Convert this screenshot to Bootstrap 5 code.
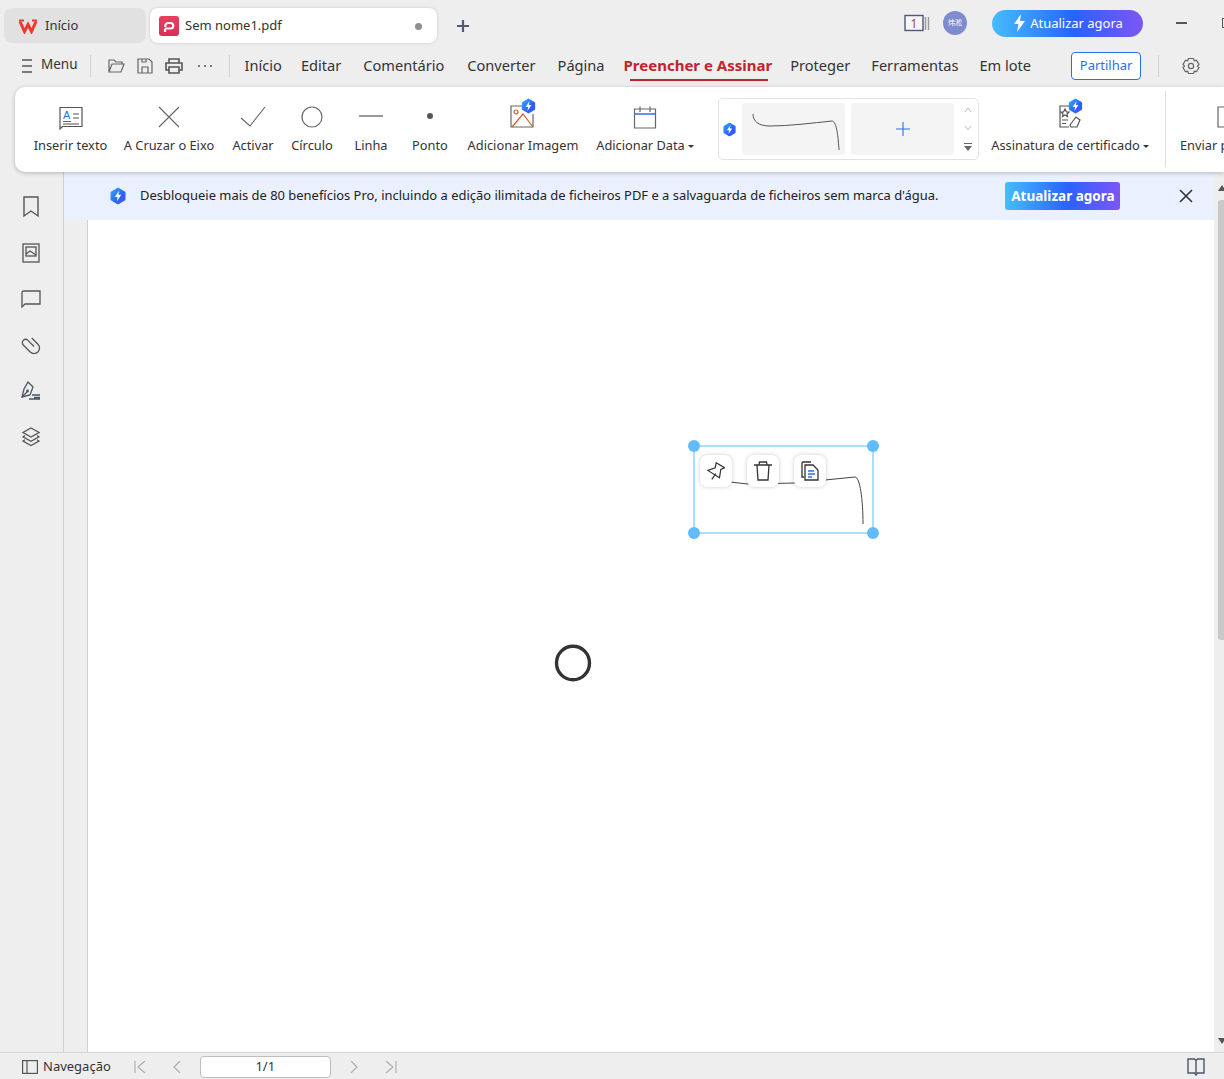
<!DOCTYPE html>
<html lang="pt">
<head>
  <meta charset="UTF-8">
  <title>Sem nome1.pdf</title>
  <link href="https://cdn.jsdelivr.net/npm/bootstrap@5.3.3/dist/css/bootstrap.min.css" rel="stylesheet">
  <style>
    html, body { height: 100%; }
    body { background: #eeeeee; color: #333; font-family: "Noto Sans", "Noto Sans CJK SC", sans-serif; font-size: 13px; overflow: hidden; }
    svg { display: block; flex: none; }
    .app { height: 1079px; width: 1224px; overflow: hidden; }

    /* barra de separadores */
    .tabbar { height: 44px; padding: 8px 0 0 4px; }
    .tab-home { width: 142px; height: 35px; background: #e1e1e1; border-radius: 8px; padding: 1px 0 0 14px; gap: 7px; }
    .tab-doc { width: 287px; height: 35px; background: #fff; border-radius: 8px; margin-left: 4px; padding: 1px 15px 0 9px; gap: 6px; box-shadow: 0 0 3px rgba(0,0,0,.18); }
    .tab-dot { width: 7px; height: 7px; background: #8f8f8f; border-radius: 50%; }
    .tab-plus { margin: 10px 0 0 18px; }
    .upgrade-pill { width: 151px; height: 27px; border-radius: 14px; background: linear-gradient(90deg, #45bdfd, #2a62ff 55%, #7d56f5); color: #fff; gap: 4px; font-size: 13px; }
    .upgrade-pill span { padding-top: 2px; }
    .avatar { width: 24px; height: 24px; border-radius: 50%; background: #7f8bd0; color: #fff; font-size: 7px; margin: 0 25px 0 13px; }
    .top-right { margin-top: -6px; }
    .win-min { width: 11px; height: 2px; background: #555; margin-left: 33px; margin-right: 35px; }
    .win-max { width: 2px; height: 10px; border: 1.5px solid #555; border-right: 0; }

    /* barra de menu */
    .menubar { height: 43px; padding-left: 22px; }
    .menu-word { margin: -2px 12px 0 9px; font-size: 13.5px; }
    .vsep { width: 1px; height: 22px; background: #d2d2d2; }
    .quick { gap: 12px; padding: 0 16px; }
    .mtabs { gap: 21px; padding-left: 15px; font-size: 14.6px; white-space: nowrap; }
    .mtab-on { color: #c0242f; font-size: 15px; font-weight: 700; position: relative; }
    .mtab-on::after { content: ""; position: absolute; left: 6px; right: 4px; bottom: -4px; height: 2px; background: #c0242f; }
    .mtab-m3 { margin-left: -3px; }
    .mtab-m2 { margin-left: -2px; }
    .mtab-p1 { margin-left: 1px; }
    .mtab-p2 { margin-left: 2px; }
    .share-btn { width: 70px; height: 28px; margin-left: 40px; border: 1px solid #2b6fe8; border-radius: 4px; background: #fff; color: #2b6fe8; font-size: 13px; }
    .gear-sep { margin: 0 23px 0 17px; }

    /* faixa de ferramentas */
    .ribbon { height: 85px; margin-left: 15px; padding-left: 11px; background: #fff; border-radius: 10px 0 0 10px; box-shadow: 0 1px 4px rgba(0,0,0,.25); position: relative; z-index: 2; overflow: hidden; white-space: nowrap; font-size: 12.8px; }
    .rb-item { height: 85px; padding-top: 19px; flex: none; }
    .rb-icon { height: 30px; }
    .rb-icon-pro { height: 38px; margin-top: -8px; }
    .rb-label { line-height: 18px; }
    .caret { display: inline-block; width: 0; height: 0; border: 3px solid transparent; border-top: 3.5px solid #333; margin: 0 0 -1px 3px; }
    .w-ins { width: 89px; } .w-cruz { width: 108px; } .w-act { width: 60px; } .w-circ { width: 58px; }
    .w-lin { width: 60px; } .w-pon { width: 58px; } .w-img { width: 128px; } .w-dat { width: 116px; }
    .w-cert { width: 182px; } .w-env { width: 44px; }
    .gallery { flex: none; width: 261px; height: 62px; margin: 11px 0 0 15px; border: 1px solid #e2e2e2; border-radius: 5px; padding: 4px 0 4px 4px; gap: 6px; }
    .sig-thumb, .sig-add { flex: none; width: 103px; height: 52px; background: #f4f4f4; border-radius: 3px; }
    .gal-arrows { flex: none; width: 16px; height: 52px; }
    .rb-sep { width: 1px; height: 76px; background: #dcdcdc; margin: 4px 14px 0 4px; flex: none; }

    /* zona principal */
    .workspace { height: 880px; }
    .sidebar { width: 64px; flex: none; border-right: 1px solid #d0d0d0; padding: 23px 1px 0 0; gap: 22px; }
    .side-slot { height: 24px; }
    .doc-col { flex: 1; min-width: 0; }
    .promo { height: 48px; padding-left: 46px; background: #eaf0fe; gap: 14px; color: #222; font-size: 12.95px; white-space: nowrap; }
    .promo-btn { flex: none; width: 115px; height: 28px; margin-left: 53px; border-radius: 3px; background: linear-gradient(90deg, #45bdfd, #2a62ff 55%, #7d56f5); color: #fff; font-weight: 700; font-size: 13.5px; }
    .promo-x { margin-left: 45px; }
    .doc-area { flex: 1; min-height: 0; }
    .gutter { width: 24px; border-right: 1px solid #d0d0d0; }
    .pdf-page { flex: 1; background: #fff; position: relative; }
    .scroll-col { width: 10px; flex: none; padding: 13px 0 8px 4px; }
    .scroll-thumb { height: 440px; margin-top: 9px; background: #c9c9c9; border-radius: 3px 0 0 3px; }
    .arrow-up { width: 0; height: 0; border: 4px solid transparent; border-bottom: 6px solid #555; border-top: 0; }
    .arrow-dn { width: 0; height: 0; margin-top: auto; border: 4px solid transparent; border-top: 6px solid #555; border-bottom: 0; }

    /* objetos colocados na pagina */
    .sel-box { position: absolute; left: 605px; top: 225px; width: 181px; height: 89px; border: 2px solid #aadfff; }
    .handle { position: absolute; width: 12px; height: 12px; border-radius: 50%; background: #62bbff; }
    .h-tl { left: -7px; top: -7px; } .h-tr { right: -7px; top: -7px; } .h-bl { left: -7px; bottom: -7px; } .h-br { right: -7px; bottom: -7px; }
    .sig-line { position: absolute; left: -2px; top: -2px; }
    .float-tools { position: absolute; left: 5px; top: 8px; gap: 15px; }
    .float-btn { width: 32px; height: 32px; background: #fff; border-radius: 7px; box-shadow: 0 0 4px rgba(0,0,0,.2); }
    .drawn-circle { position: absolute; left: 466px; top: 424px; }

    /* barra de estado */
    .statusbar { height: 27px; border-top: 1px solid #d4d4d4; padding: 1px 19px 0 22px; font-size: 13px; }
    .nav-word { margin: 0 23px 0 5px; }
    .nav-prev { margin-left: 27px; }
    .page-input { width: 131px; height: 22px; margin: 0 19px; background: #fff; border: 1px solid #bdbdbd; border-radius: 4px; }
    .nav-last { margin-left: 27px; }
  </style>
</head>
<body>
<svg width="0" height="0" class="position-absolute">
  <defs>
    <linearGradient id="proGrad" x1="0" y1="0" x2="1" y2="1">
      <stop offset="0" stop-color="#34b0fb"/><stop offset=".6" stop-color="#2a62ff"/><stop offset="1" stop-color="#4a55f5"/>
    </linearGradient>
    <linearGradient id="pdfGrad" x1="0" y1="0" x2="0" y2="1">
      <stop offset="0" stop-color="#e9405f"/><stop offset="1" stop-color="#d92f55"/>
    </linearGradient>
    <symbol id="pro" viewBox="0 0 16 18">
      <path d="M8 0.5 14.8 4.4Q15.5 4.8 15.5 5.6V12.4Q15.5 13.2 14.8 13.6L8 17.5 1.2 13.6Q.5 13.2.5 12.4V5.6Q.5 4.8 1.2 4.4Z" fill="url(#proGrad)"/>
      <path d="M9.2 3.5 4.8 10H7.6L6.8 14.5 11.3 7.8H8.4Z" fill="#fff"/>
    </symbol>
  </defs>
</svg>

<div class="app d-flex flex-column">

  <div class="tabbar d-flex">
    <div class="tab-home d-flex align-items-center">
      <svg width="20" height="15" viewBox="0 0 20 15" fill="none" stroke="#ea3a2a" stroke-width="3"><path d="M2 2.500 6.500 12.500 10 5.500 13.500 12.500 18 2.500"/><path d="M1 1.500H6M14 1.500H19" stroke-width="2"/></svg>
      <span>Início</span>
    </div>
    <div class="tab-doc d-flex align-items-center">
      <svg width="20" height="20" viewBox="0 0 20 20" fill="none"><rect width="20" height="20" rx="3" fill="url(#pdfGrad)"/><path d="M6 16V12.500M6 12.500H11.500A2.700 2.700 0 0 0 11.500 7H9A2.700 2.700 0 0 0 6.300 9.700V11" stroke="#fff" stroke-width="2.200"/></svg>
      <span class="flex-grow-1">Sem nome1.pdf</span>
      <span class="tab-dot"></span>
    </div>
    <svg class="tab-plus" width="16" height="16" viewBox="0 0 16 16"><path d="M8 2V14M2 8H14" stroke="#4d5a75" stroke-width="2.2"/></svg>
    <div class="top-right ms-auto d-flex align-items-center">
      <svg width="26" height="18" viewBox="0 0 26 18"><rect x="1" y="1.5" width="18" height="15" fill="#f6f6f6" stroke="#4b5a78" stroke-width="1.4"/><path d="M21.5 3V16M24.5 3V16" stroke="#9a9a9a" stroke-width="1.4"/><text x="10" y="14" font-size="12" text-anchor="middle" fill="#b0443f" font-family="Noto Sans">1</text></svg>
      <div class="avatar d-flex align-items-center justify-content-center">炜淞</div>
      <div class="upgrade-pill d-flex align-items-center justify-content-center">
        <svg width="14" height="18" viewBox="0 0 14 18"><path d="M9 0 2 10H6.5L5 18 13 7H8Z" fill="#fff"/></svg>
        <span>Atualizar agora</span>
      </div>
      <div class="win-min"></div>
      <div class="win-max"></div>
    </div>
  </div>

  <div class="menubar d-flex align-items-center">
    <svg width="10" height="14" viewBox="0 0 10 14"><path d="M0 1H10M0 7H10M0 13H10" stroke="#555" stroke-width="1.5"/></svg>
    <span class="menu-word">Menu</span>
    <div class="vsep"></div>
    <div class="quick d-flex align-items-center">
      <svg width="18" height="16" viewBox="0 0 18 16" fill="none" stroke="#666" stroke-width="1.2"><path d="M2 14V2H7L9 4H15V6M2 14H14L17 6H5Z"/></svg>
      <svg width="16" height="16" viewBox="0 0 16 16" fill="none" stroke="#666" stroke-width="1.2"><path d="M1 1H12L15 4V15H1ZM5 15V9H11V15M5 1V4H9V1"/></svg>
      <svg width="18" height="16" viewBox="0 0 18 16" fill="none" stroke="#555" stroke-width="1.6"><path d="M4 5V1H14V5M4 12H1V5H17V12H14M4 9H14V15H4Z"/></svg>
      <svg width="18" height="4" viewBox="0 0 18 4"><circle cx="4" cy="2" r="1" fill="#555"/><circle cx="10" cy="2" r="1" fill="#555"/><circle cx="16" cy="2" r="1" fill="#555"/></svg>
    </div>
    <div class="vsep"></div>
    <div class="mtabs d-flex align-items-center">
      <span>Início</span><span class="mtab-m2">Editar</span><span class="mtab-p1">Comentário</span><span class="mtab-p2">Converter</span><span class="mtab-p1">Página</span>
      <span class="mtab-on mtab-m2">Preencher e Assinar</span>
      <span class="mtab-m3">Proteger</span><span>Ferramentas</span><span>Em lote</span>
    </div>
    <div class="share-btn d-flex align-items-center justify-content-center">Partilhar</div>
    <div class="vsep gear-sep"></div>
    <svg width="18" height="18" viewBox="0 0 18 18" fill="none" stroke="#666" stroke-width="1.2"><path d="M6.5 1.5H11.5L12.3 3.7 14.6 3.3 17 7.5 15.5 9 17 10.5 14.6 14.7 12.3 14.3 11.5 16.5H6.5L5.7 14.3 3.4 14.7 1 10.5 2.5 9 1 7.5 3.4 3.3 5.7 3.7Z"/><circle cx="9" cy="9" r="2.6"/></svg>
  </div>

  <div class="ribbon d-flex">
    <div class="rb-item w-ins d-flex flex-column align-items-center">
      <div class="rb-icon">
        <svg width="24" height="24" viewBox="0 0 24 24" fill="none" stroke="#555" stroke-width="1.2"><path d="M1 1.5H23V20.5H3.5L1 23Z"/><text x="4" y="13" font-size="11" fill="#2b6fe8" stroke="none" font-family="Liberation Sans">A</text><path d="M4 15.5H12" stroke="#2b6fe8"/><path d="M14 8H20M14 12H20M4 18H20"/></svg>
      </div>
      <div class="rb-label">Inserir texto</div>
    </div>
    <div class="rb-item w-cruz d-flex flex-column align-items-center">
      <div class="rb-icon">
        <svg width="22" height="22" viewBox="0 0 22 22" stroke="#666" stroke-width="1.1"><path d="M1 1 21 21M21 1 1 21"/></svg>
      </div>
      <div class="rb-label">A Cruzar o Eixo</div>
    </div>
    <div class="rb-item w-act d-flex flex-column align-items-center">
      <div class="rb-icon">
        <svg width="26" height="22" viewBox="0 0 26 22" fill="none" stroke="#666" stroke-width="1.1"><path d="M1 12 10 20 25 1"/></svg>
      </div>
      <div class="rb-label">Activar</div>
    </div>
    <div class="rb-item w-circ d-flex flex-column align-items-center">
      <div class="rb-icon">
        <svg width="22" height="22" viewBox="0 0 22 22" fill="none" stroke="#666" stroke-width="1.2"><circle cx="11" cy="11" r="10"/></svg>
      </div>
      <div class="rb-label">Círculo</div>
    </div>
    <div class="rb-item w-lin d-flex flex-column align-items-center">
      <div class="rb-icon">
        <svg width="26" height="22" viewBox="0 0 26 22" stroke="#777" stroke-width="1.4"><path d="M1 10H25"/></svg>
      </div>
      <div class="rb-label">Linha</div>
    </div>
    <div class="rb-item w-pon d-flex flex-column align-items-center">
      <div class="rb-icon">
        <svg width="8" height="22" viewBox="0 0 8 22"><circle cx="4" cy="10" r="3" fill="#555"/></svg>
      </div>
      <div class="rb-label">Ponto</div>
    </div>
    <div class="rb-item w-img d-flex flex-column align-items-center">
      <div class="rb-icon-pro">
        <svg width="28" height="32" viewBox="0 0 28 32" fill="none" stroke-width="1.2"><path d="M15 8H2V29H24V16" stroke="#666"/><circle cx="7" cy="14" r="2" stroke="#c9622f"/><path d="M3 29 14 16 24 29" stroke="#c9622f"/><use href="#pro" x="12" y="0" width="15" height="16"/></svg>
      </div>
      <div class="rb-label">Adicionar Imagem</div>
    </div>
    <div class="rb-item w-dat d-flex flex-column align-items-center">
      <div class="rb-icon">
        <svg width="24" height="24" viewBox="0 0 24 24" fill="none" stroke="#666" stroke-width="1.2"><path d="M1.5 3H22.5V22H1.5ZM7 .5V6M17 .5V6"/><path d="M1.5 8H22.5" stroke="#2b6fe8" stroke-width="1.4"/></svg>
      </div>
      <div class="rb-label">Adicionar Data<span class="caret"></span></div>
    </div>
    <div class="gallery d-flex align-items-center">
      <svg width="13" height="15" viewBox="0 0 16 18"><use href="#pro" width="16" height="18"/></svg>
      <div class="sig-thumb">
        <svg width="103" height="52" viewBox="0 0 103 52" fill="none" stroke="#555" stroke-width="1"><path d="M11 11C11 18 16 23 28 23 48 23 70 20 90 18 94 18 96 30 97 47"/></svg>
      </div>
      <div class="sig-add d-flex align-items-center justify-content-center">
        <svg width="14" height="14" viewBox="0 0 14 14"><path d="M7 0V14M0 7H14" stroke="#2b6fe8" stroke-width="1.1"/></svg>
      </div>
      <div class="gal-arrows d-flex flex-column align-items-center justify-content-between py-1">
        <svg width="8" height="6" viewBox="0 0 8 6" fill="none" stroke="#bbb"><path d="M1 5 4 1 7 5"/></svg>
        <svg width="8" height="6" viewBox="0 0 8 6" fill="none" stroke="#bbb"><path d="M1 1 4 5 7 1"/></svg>
        <svg width="8" height="8" viewBox="0 0 8 8"><path d="M0 0H8V1H0ZM0 3H8L4 8Z" fill="#666"/></svg>
      </div>
    </div>
    <div class="rb-item w-cert d-flex flex-column align-items-center">
      <div class="rb-icon-pro">
        <svg width="28" height="32" viewBox="0 0 28 32" fill="none" stroke="#555" stroke-width="1.2"><path d="M15 8H4V29H13"/><path d="M9 11 10.500 14H13L11 16 11.500 18.500 9 17 6.500 18.500 7 16 5 14H7.500Z"/><path d="M6 22H12M6 25.500H10"/><path d="M14 27 20 19 24 22 21 29H15Z"/><use href="#pro" x="12" y="0" width="15" height="16" stroke="none"/></svg>
      </div>
      <div class="rb-label">Assinatura de certificado<span class="caret"></span></div>
    </div>
    <div class="rb-sep"></div>
    <div class="rb-item w-env d-flex flex-column overflow-hidden">
      <div class="rb-icon d-flex justify-content-end">
        <svg width="7" height="22" viewBox="0 0 7 22" fill="none" stroke="#666" stroke-width="1.2"><path d="M8 1H1V21H8"/></svg>
      </div>
      <div class="rb-label">Enviar p</div>
    </div>
  </div>

  <div class="workspace d-flex">
    <div class="sidebar d-flex flex-column align-items-center">
      <div class="side-slot d-flex align-items-center"><svg width="18" height="22" viewBox="0 0 18 22" fill="none" stroke="#555" stroke-width="1.4"><path d="M2 1H16V20L9 15 2 20Z"/></svg></div>
      <div class="side-slot d-flex align-items-center"><svg width="18" height="20" viewBox="0 0 18 20" fill="none" stroke="#555" stroke-width="1.3"><rect x="1" y="1" width="16" height="18"/><rect x="4" y="4" width="10" height="9"/><path d="M4 11 8 8 14 12"/></svg></div>
      <div class="side-slot d-flex align-items-center"><svg width="20" height="18" viewBox="0 0 20 18" fill="none" stroke="#555" stroke-width="1.3"><path d="M3 1H19V14H4L1 17V3Q1 1 3 1Z"/></svg></div>
      <div class="side-slot d-flex align-items-center"><svg width="24" height="24" viewBox="-1 -1 22 22" fill="none" stroke="#555" stroke-width="1.2"><path transform="rotate(-45 10 10)" d="M15 6V14A5 5 0 0 1 5 14V5A3 3 0 0 1 11 5V13"/></svg></div>
      <div class="side-slot d-flex align-items-center"><svg width="20" height="20" viewBox="0 0 20 20" fill="none" stroke="#4b5568" stroke-width="1.3"><path d="M7 1 12 6 9 14 1 16 3 8Z"/><circle cx="6.500" cy="10" r=".8"/><path d="M1 16 6 11M11 14H19M13 16.500H19M8 18H19"/></svg></div>
      <div class="side-slot d-flex align-items-center"><svg width="18" height="20" viewBox="0 0 18 20" fill="none" stroke="#555" stroke-width="1.2"><path d="M9 1 17 5.500 9 10 1 5.500ZM3 8.500 1 9.800 9 14.300 17 9.800 15 8.500M3 12.800 1 14 9 18.500 17 14 15 12.800"/></svg></div>
    </div>

    <div class="doc-col d-flex flex-column">
      <div class="promo d-flex align-items-center">
        <svg width="16" height="18" viewBox="0 0 16 18"><use href="#pro" width="16" height="18"/></svg>
        <span>Desbloqueie mais de 80 benefícios Pro, incluindo a edição ilimitada de ficheiros PDF e a salvaguarda de ficheiros sem marca d'água.</span>
        <div class="promo-btn d-flex align-items-center justify-content-center">Atualizar agora</div>
        <svg class="promo-x" width="14" height="14" viewBox="0 0 14 14" stroke="#333" stroke-width="1.6"><path d="M1 1 13 13M13 1 1 13"/></svg>
      </div>
      <div class="doc-area d-flex">
        <div class="gutter"></div>
        <div class="pdf-page">
          <div class="sel-box">
            <svg class="sig-line" width="181" height="89" viewBox="0 0 181 89" fill="none" stroke="#444" stroke-width="1"><path d="M37 37 55 39 102 38 132 35 162 32C167 32 170 55 170 79"/></svg>
            <div class="float-tools d-flex">
              <div class="float-btn d-flex align-items-center justify-content-center">
                <svg width="18" height="18" viewBox="0 0 18 18" fill="none" stroke="#333" stroke-width="1.2"><path d="M9.200 .7 17.500 5.700 13.800 7.400 12.500 15.700 .8 8.400 8.200 5.700ZM8.800 11.700 4.800 17.400"/></svg>
              </div>
              <div class="float-btn d-flex align-items-center justify-content-center">
                <svg width="20" height="20" viewBox="0 0 20 20" fill="none" stroke="#333" stroke-width="1.3"><path d="M1 4H19M6 4 6.500 1H13.500L14 4M4 4 5 19H15L16 4"/></svg>
              </div>
              <div class="float-btn d-flex align-items-center justify-content-center">
                <svg width="18" height="20" viewBox="0 0 18 20" fill="none" stroke-width="1.3"><path d="M3 16H1V2Q1 1 2 1H10" stroke="#333"/><path d="M4 4H12L17 9V19H4Z" stroke="#333"/><path d="M7 10H13M7 13H14M7 16H11" stroke="#2b6fe8"/></svg>
              </div>
            </div>
            <span class="handle h-tl"></span><span class="handle h-tr"></span>
            <span class="handle h-bl"></span><span class="handle h-br"></span>
          </div>
          <svg class="drawn-circle" width="38" height="38" viewBox="0 0 38 38" fill="none" stroke="#333" stroke-width="3.400"><ellipse cx="19" cy="19" rx="16.500" ry="16.800"/></svg>
        </div>
      </div>
    </div>

    <div class="scroll-col d-flex flex-column">
      <div class="arrow-up"></div>
      <div class="scroll-thumb"></div>
      <div class="arrow-dn"></div>
    </div>
  </div>

  <div class="statusbar d-flex align-items-center">
    <svg width="16" height="14" viewBox="0 0 16 14" fill="none" stroke="#555" stroke-width="1.2"><rect x=".6" y=".6" width="14.800" height="12.800"/><path d="M5 1V13"/></svg>
    <span class="nav-word">Navegação</span>
    <svg width="12" height="12" viewBox="0 0 12 12" fill="none" stroke="#aaa" stroke-width="1.1"><path d="M1 0V12M11 0 4 6 11 12"/></svg>
    <svg class="nav-prev" width="8" height="12" viewBox="0 0 8 12" fill="none" stroke="#aaa" stroke-width="1.1"><path d="M7 0 1 6 7 12"/></svg>
    <div class="page-input d-flex align-items-center justify-content-center">1/1</div>
    <svg width="8" height="12" viewBox="0 0 8 12" fill="none" stroke="#aaa" stroke-width="1.1"><path d="M1 0 7 6 1 12"/></svg>
    <svg class="nav-last" width="12" height="12" viewBox="0 0 12 12" fill="none" stroke="#aaa" stroke-width="1.1"><path d="M1 0 8 6 1 12M11 0V12"/></svg>
    <svg class="ms-auto" width="18" height="18" viewBox="0 0 18 18" fill="none" stroke="#4b5568" stroke-width="1.4"><path d="M1 1H7.500L9 2.500 10.500 1H17V15H10.500L9 17 7.500 15H1ZM9 2.500V15"/></svg>
  </div>
</div>
<script src="https://cdn.jsdelivr.net/npm/bootstrap@5.3.3/dist/js/bootstrap.bundle.min.js"></script>
</body>
</html>
